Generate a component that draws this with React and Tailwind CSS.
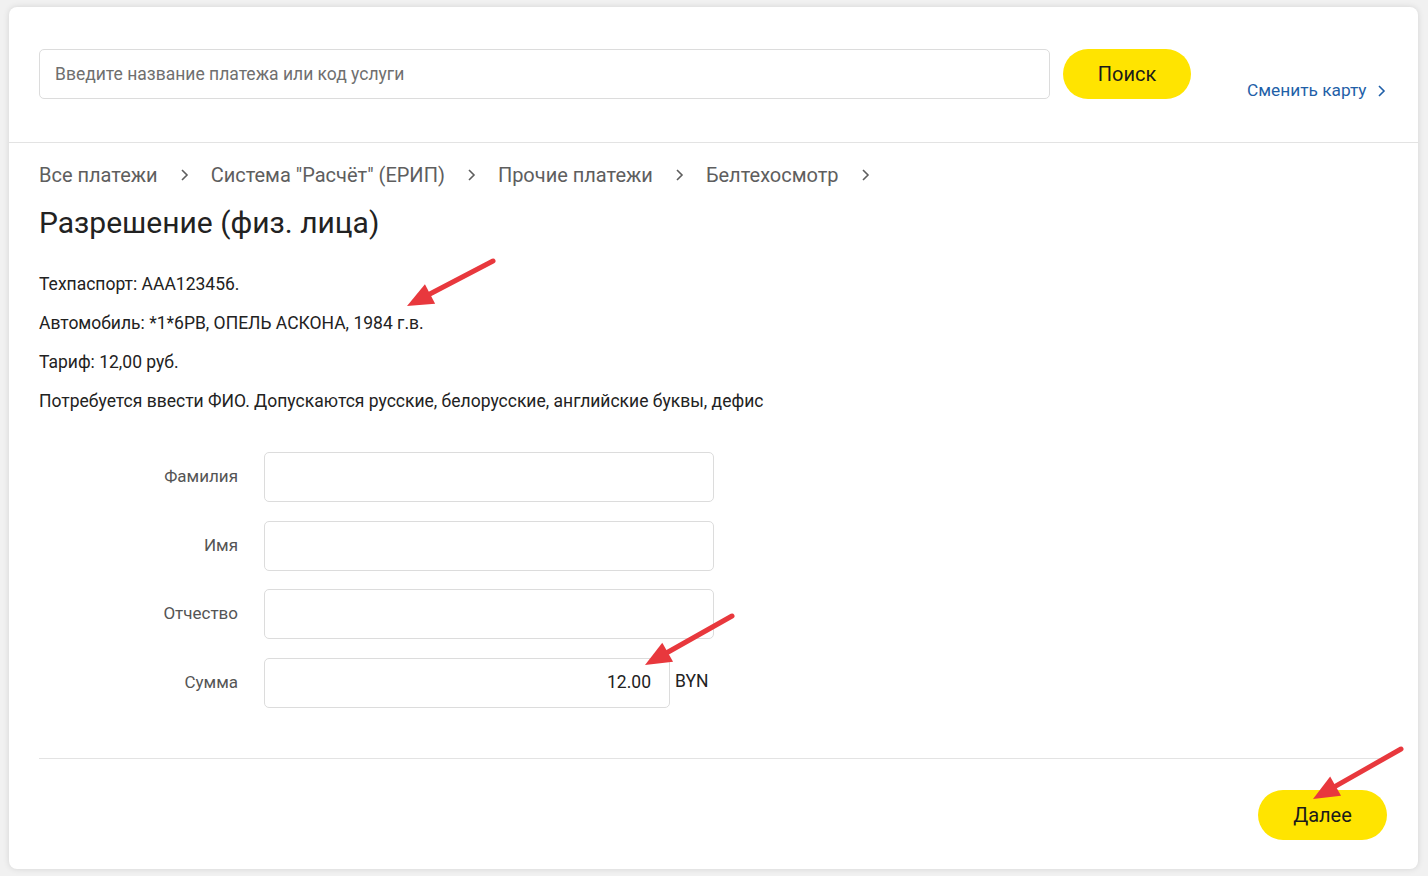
import React from "react";

function Arrow({ x1, y1, x2, y2 }) {
  const dx = x2 - x1, dy = y2 - y1;
  const len = Math.hypot(dx, dy);
  const ux = dx / len, uy = dy / len;
  const hl = 26, hw = 11;
  const bx = x2 - ux * hl, by = y2 - uy * hl;
  const px = -uy, py = ux;
  const pts = `${x2},${y2} ${bx + px * hw},${by + py * hw} ${bx - px * hw},${by - py * hw}`;
  return (
    <g>
      <line x1={x1} y1={y1} x2={bx + ux * 4} y2={by + uy * 4} stroke="#e8383d" strokeWidth="5" strokeLinecap="round" />
      <polygon points={pts} fill="#e8383d" />
    </g>
  );
}

function Chevron({ className }) {
  return (
    <svg className={className} width="10" height="14" viewBox="0 0 10 14" fill="none">
      <path d="M3 2l5 5-5 5" stroke="currentColor" strokeWidth="1.6" />
    </svg>
  );
}

export default function App() {
  const rows = [
    { label: "Фамилия" },
    { label: "Имя" },
    { label: "Отчество" },
  ];
  return (
    <div className="relative w-[1428px] h-[876px] bg-[#f1f1f1] overflow-hidden pt-[7px] pl-[9px]" style={{ fontFamily: "Roboto, 'Liberation Sans', sans-serif" }}>
      <div className="w-[1409px] h-[862px] bg-white rounded-[8px] shadow-[0_0_6px_rgba(0,0,0,0.12)] flex flex-col">
        {/* header */}
        <div className="h-[136px] border-b border-[#e3e3e3] flex items-start pt-[42px] pl-[30px]">
          <div className="w-[1011px] h-[50px] border border-[#dcdcdc] rounded-[5px] flex items-center pl-[15px] text-[17.5px] text-[#6f6f6f]">
            Введите название платежа или код услуги
          </div>
          <button className="ml-[13px] w-[128px] h-[50px] rounded-full bg-[#ffe400] text-[20px] text-[#1a1a1a]">Поиск</button>
          <div className="ml-[56px] mt-[29px] flex items-center gap-[9px] text-[17.3px] text-[#1f5fa8]">
            <span>Сменить карту</span>
            <Chevron className="text-[#1f5fa8]" />
          </div>
        </div>
        {/* content */}
        <div className="px-[30px] pt-[19px] flex-1 flex flex-col">
          <div className="flex items-center text-[20px] text-[#5e5e5e] h-[26px]">
            <span>Все платежи</span>
            <Chevron className="mx-[21.5px] text-[#5e5e5e]" />
            <span>Система "Расчёт" (ЕРИП)</span>
            <Chevron className="mx-[21.5px] text-[#5e5e5e]" />
            <span>Прочие платежи</span>
            <Chevron className="mx-[21.5px] text-[#5e5e5e]" />
            <span>Белтехосмотр</span>
            <Chevron className="mx-[21.5px] text-[#5e5e5e]" />
          </div>
          <h1 className="mt-[17px] text-[30px] leading-[36px] text-[#222]">Разрешение (физ. лица)</h1>
          <div className="mt-[32px] flex flex-col gap-[16px] text-[17.5px] leading-[23px] text-[#222]">
            <p>Техпаспорт: AAA123456.</p>
            <p>Автомобиль: *1*6РВ, ОПЕЛЬ АСКОНА, 1984 г.в.</p>
            <p>Тариф: 12,00 руб.</p>
            <p>Потребуется ввести ФИО. Допускаются русские, белорусские, английские буквы, дефис</p>
          </div>
          <div className="mt-[39px] flex flex-col gap-[18.5px]">
            {rows.map((r) => (
              <div key={r.label} className="flex items-center">
                <div className="w-[199px] text-right text-[17px] text-[#555]">{r.label}</div>
                <div className="ml-[26px] w-[450px] h-[50px] border border-[#dcdcdc] rounded-[5px]" />
              </div>
            ))}
            <div className="flex items-center">
              <div className="w-[199px] text-right text-[17px] text-[#555]">Сумма</div>
              <div className="ml-[26px] w-[406px] h-[50px] border border-[#dcdcdc] rounded-[5px] flex items-center justify-end pr-[18px] text-[17.5px] text-[#222]">12.00</div>
              <div className="ml-[5px] text-[17.5px] text-[#222] -mt-[2px]">BYN</div>
            </div>
          </div>
          <div className="mt-[50px] border-t border-[#e3e3e3] w-[1349px]" />
          <div className="flex justify-end pr-[1px] mt-[31px] w-[1349px]">
            <button className="w-[129px] h-[50px] rounded-full bg-[#ffe400] text-[20px] text-[#1a1a1a]">Далее</button>
          </div>
        </div>
      </div>
      <svg className="absolute inset-0 pointer-events-none" width="1428" height="876">
        <Arrow x1={493} y1={261} x2={407} y2={306} />
        <Arrow x1={732} y1={616} x2={645} y2={665} />
        <Arrow x1={1401} y1={749} x2={1313} y2={799} />
      </svg>
    </div>
  );
}
